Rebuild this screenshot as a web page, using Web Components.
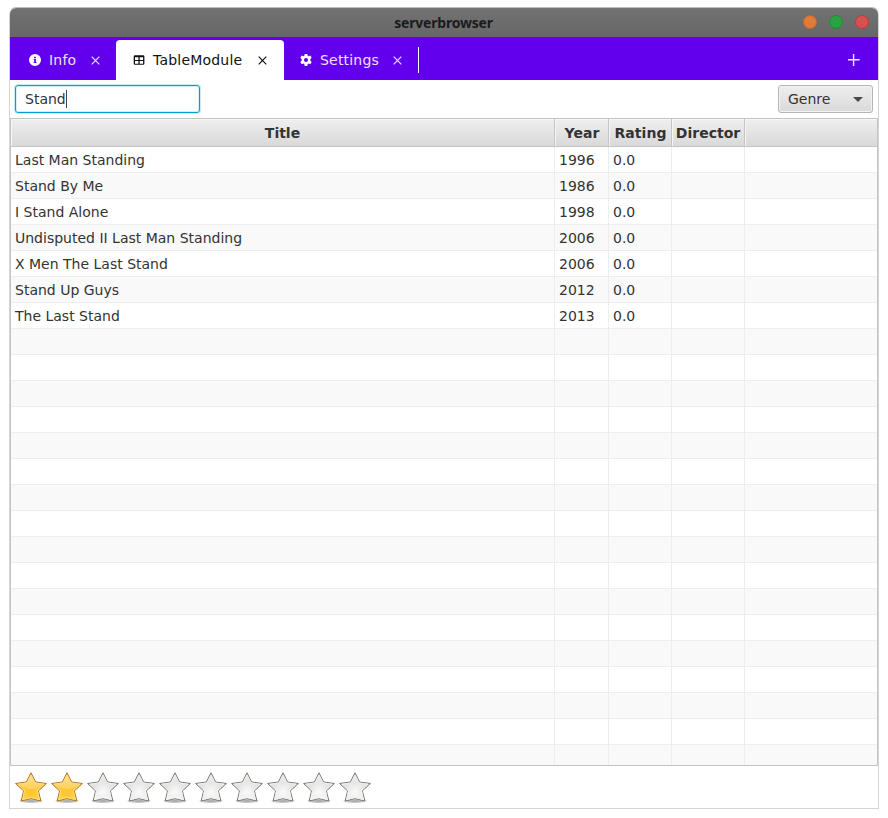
<!DOCTYPE html>
<html lang="en"><head><meta charset="utf-8"><title>serverbrowser</title>
<style>
html,body{margin:0;background:#fff}
body{font:14px/20px "DejaVu Sans",sans-serif;color:#333;padding:7px 9px 0 9px;width:870px}
</style></head><body>
<app-window caption="serverbrowser">
  <tab-strip slot="tabs">
    <tab-item icon="info" style="width:106px">Info</tab-item>
    <tab-item icon="table" active style="width:168px">TableModule</tab-item>
    <tab-item icon="gear" style="width:134px">Settings</tab-item>
  </tab-strip>
  <tool-row>
    <search-field>Stand</search-field>
    <drop-button>Genre</drop-button>
  </tool-row>
  <movie-table></movie-table>
  <star-rating value="2" max="10"></star-rating>
</app-window>
<script>
const define = (name, render) => customElements.define(name, class extends HTMLElement {
  connectedCallback() {
    if (this.shadowRoot) return;
    this.attachShadow({mode:'open'}).innerHTML = '<style>*{box-sizing:border-box}</style>' + render(this);
  }
});

define('app-window', el => `<style>
:host{display:flex;flex-direction:column;box-sizing:border-box;width:870px;height:802px;border:1px solid #d5d5d5;border-top-color:#bcbcbc;border-radius:7px 7px 0 0;overflow:hidden;background:#fff}
header{flex:none;height:29px;background:linear-gradient(#777 0,#717171 2px,#676767);display:grid;grid-template-columns:1fr auto 1fr;align-items:center;padding-right:9px}
h1{grid-column:2;margin:0 0 0 8px;font:bold 14px/20px "Noto Sans","Open Sans",sans-serif;color:#1b1b1b;letter-spacing:-.2px}
nav{display:flex;gap:12px;justify-content:flex-end;margin-top:-1px}
i{width:14px;height:14px;border-radius:50%;border:1px solid}
</style><header><h1>${el.getAttribute('caption')}</h1><nav>
<i style="background:#e07b3a;border-color:#c8682c"></i><i style="background:#2ba143;border-color:#168f30"></i><i style="background:#d65252;border-color:#c93636"></i></nav></header>
<slot name="tabs"></slot><slot></slot>`);

define('tab-strip', () => `<style>
:host{display:flex;flex:none;height:43px;background:#6200ee;padding:3px 18px 0 0;box-sizing:border-box;align-items:stretch}
b{width:1px;height:26px;background:#fff;margin-top:7px}
svg{margin:14px 0 0 auto}
</style><slot></slot><b></b><svg width="12" height="12" viewBox="0 0 12 12"><path d="M5.6 0v12M0 5.7h11.6" stroke="#fff" stroke-opacity=".9" stroke-width="1.4"/></svg>`);

const icons = {
  info:'<path fill-rule="evenodd" d="M6 0a6 6 0 1 0 0 12A6 6 0 0 0 6 0zM5.1 2.8h1.8v1.4H5.1zM4.7 5.1h2.2v3h.6V9H4.6v-.9h.6V6h-.5z"/>',
  table:'<path fill-rule="evenodd" d="M2 1.2h8.1q1.3 0 1.3 1.3v7q0 1.3-1.3 1.3H2Q.7 10.8.7 9.5v-7Q.7 1.2 2 1.2zM2 3.2V6h3.4V3.2zm4.7 0V6h3.4V3.2zM2 7v2.7h3.4V7zm4.7 0v2.7h3.4V7z"/>',
  gear:'<path fill-rule="evenodd" d="M4.8 0h2.4l.4 1.6.9.5 1.6-.6 1.2 2.1-1.2 1.1v1.6l1.2 1.1-1.2 2.1-1.6-.6-.9.5-.4 1.7H4.8l-.4-1.7-.9-.5-1.6.6L.7 7.4l1.2-1.1V4.7L.7 3.6l1.2-2.1 1.6.6.9-.5zM6 3.7a1.9 1.9 0 1 0 0 3.8 1.9 1.9 0 0 0 0-3.8z" transform="translate(-.4 0) scale(1.07)"/>'
};
define('tab-item', el => `<style>
:host{display:flex;align-items:center;flex:none;box-sizing:border-box;padding:0 16px 0 19px;color:#eee0ff;border-radius:4px 4px 0 0;height:40px}
:host([active]){background:#fff;color:#111;padding-left:17px;padding-right:17px}
:host([icon=gear]){padding-left:16px}
svg{flex:none;fill:#fff}:host([active]) svg{fill:#111}
span{margin:0 auto 0 8px;white-space:nowrap;letter-spacing:.2px}
</style><svg width="12" height="12" viewBox="0 0 12 12">${icons[el.getAttribute('icon')]}</svg><span><slot></slot></span>
<svg width="9" height="9" viewBox="0 0 9 9"><path d="M.7.7l7.6 7.6M8.3.7L.7 8.3" stroke="currentColor" stroke-width="1.2"/></svg>`);

define('tool-row', () => `<style>:host{display:flex;flex:none;height:38px;box-sizing:border-box;padding:5px;justify-content:space-between}</style><slot></slot>`);

define('search-field', () => `<style>
:host{display:flex;align-items:center;box-sizing:border-box;width:185px;height:28px;border:1px solid #039ed3;border-radius:3px;padding-left:9px;box-shadow:inset 0 0 0 1px #d5eff8,0 0 0 1px #c8ebf6}
i{width:1px;height:18px;background:#444}
</style><slot></slot><i></i>`);

define('drop-button', () => `<style>
:host{display:flex;align-items:center;justify-content:space-between;box-sizing:border-box;width:95px;height:28px;border:1px solid #b5b5b5;border-radius:3px;padding:0 9px;background:linear-gradient(#eee,#d9d9d9);box-shadow:inset 0 0 0 1px #f3f3f3}
i{border:5px solid transparent;border-top-color:#4a4a4a;border-bottom:0}
</style><slot></slot><i></i>`);

const movies = [['Last Man Standing',1996],['Stand By Me',1986],['I Stand Alone',1998],['Undisputed II Last Man Standing',2006],['X Men The Last Stand',2006],['Stand Up Guys',2012],['The Last Stand',2013]];
define('movie-table', () => `<style>
:host{display:block;flex:none;box-sizing:border-box;height:648px;border:1px solid #c4c4c4;overflow:hidden}
div{display:grid;grid-template-columns:544px 54px 63px 73px 1fr;grid-template-rows:100%;height:26px}
span{border-right:1px solid #ededed;border-bottom:1px solid #ededed;padding-left:4px;line-height:26px;white-space:nowrap}
span:last-child{border-right:0}
.even{background:#f9f9f9}
.head{height:28px}
.head span{font-weight:bold;text-align:center;padding:0;line-height:28px;border-color:#c4c4c4;background:linear-gradient(#efefef,#d9d9d9);box-shadow:inset 1px 1px #f6f6f6}
.head span:nth-child(2),.head span:nth-child(3){padding-left:1px;letter-spacing:.08px}
</style><div class="head"><span>Title</span><span>Year</span><span>Rating</span><span>Director</span><span></span></div>` +
Array.from({length:24}, (_, i) => { const m = movies[i];
  return `<div class="${i%2?'even':''}"><span>${m?m[0]:''}</span><span>${m?m[1]:''}</span><span>${m?'0.0':''}</span><span></span><span></span></div>`; }).join(''));

define('star-rating', el => {
  const value = +el.getAttribute('value'), max = +el.getAttribute('max');
  const star = 'M16 1.2l4.6 9.2 10.8 1.5-8 7.4 2.5 10.2-9.9-2.6-9.9 2.6 2.5-10.2-8-7.4 10.8-1.5z';
  let out = `<style>:host{display:flex;flex:1;padding:5px 0 0 5px;gap:4px}svg{flex:none}</style>`;
  for (let i = 0; i < max; i++) {
    const on = i < value, s = on ? '#b07318' : '#74766f';
    out += `<svg width="32" height="33" viewBox="0 0 32 33"><defs>
    <linearGradient id="g${i}" x2="0" y2="1"><stop offset="0" stop-color="${on?'#ffdc85':'#e8e8e6'}"/><stop offset=".5" stop-color="${on?'#fdc945':'#dedede'}"/><stop offset="1" stop-color="${on?'#ffd547':'#f4f4f4'}"/></linearGradient>
    <radialGradient id="r${i}" cx=".5" cy=".68" r=".35"><stop stop-color="${on?'#ffc529':'#fafafa'}"/><stop offset="1" stop-color="${on?'#ffc529':'#fafafa'}" stop-opacity="0"/></radialGradient>
    <radialGradient id="s${i}"><stop stop-color="#444" stop-opacity=".5"/><stop offset=".65" stop-color="#555" stop-opacity=".32"/><stop offset="1" stop-color="#777" stop-opacity="0"/></radialGradient></defs>
    <ellipse cx="16" cy="30" rx="13" ry="2.4" fill="url(#s${i})"/>
    <g transform="translate(0 .6)">
    <path d="${star}" fill="url(#g${i})" stroke="${s}" stroke-linejoin="round"/>
    <path d="${star}" fill="url(#r${i})"/>
    <path d="M16 3.5l4 7.8 9.1 1.2-6.8 6.4 2.1 9-8.4-2.2-8.4 2.2 2.1-9-6.8-6.4 9.1-1.2z" fill="none" stroke="${on?'#ffe29a':'#f4f4ef'}" stroke-width=".8"/>
    <path d="M16 4.5l3.4 7.2 8.1 1.3Q22 17.5 16 17.3T4.5 13l8.1-1.3z" fill="#fff" fill-opacity=".2"/></g></svg>`;
  }
  return out;
});
</script></body></html>
